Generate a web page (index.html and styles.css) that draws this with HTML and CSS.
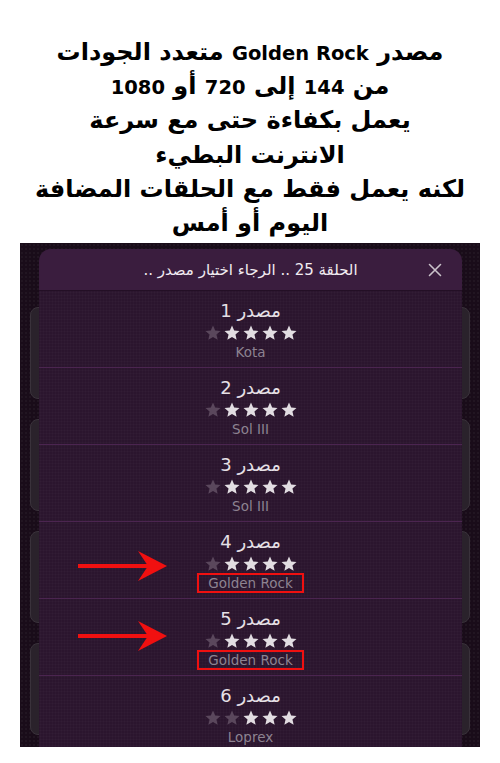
FILE: index.html
```html
<!DOCTYPE html>
<html lang="ar">
<head>
<meta charset="utf-8">
<title>Golden Rock</title>
<link rel="stylesheet" href="styles.css">
</head>
<body>
<div class="caption" dir="rtl">
  <p>مصدر <span class="latin">Golden Rock</span> متعدد الجودات</p>
  <p>من <span class="latin">144</span> إلى <span class="latin">720</span> أو <span class="latin">1080</span></p>
  <p>يعمل بكفاءة حتى مع سرعة</p>
  <p>الانترنت البطيء</p>
  <p>لكنه يعمل فقط مع الحلقات المضافة</p>
  <p>اليوم أو أمس</p>
</div>

<div class="screen">
  <div class="backdrop">
    <div class="bg-card"></div>
    <div class="bg-card"></div>
    <div class="bg-card"></div>
    <div class="bg-card"></div>
  </div>

  <div class="modal" dir="rtl">
    <div class="modal-head">
      <span class="close">
        <svg width="14" height="14" viewBox="0 0 14 14"><path d="M1.5 1.5 L12.5 12.5 M12.5 1.5 L1.5 12.5" stroke="#c9c2ca" stroke-width="1.6" stroke-linecap="round" fill="none"/></svg>
      </span>
      <span class="modal-title">الحلقة 25 .. الرجاء اختيار مصدر ..</span>
      <span class="spacer"></span>
    </div>

    <div class="source">
      <div class="src-title">مصدر 1</div>
      <div class="stars">
        <svg class="star on" viewBox="0 0 24 24"><polygon points="12,2 14.9,8.6 22,9.3 16.6,14 18.2,21 12,17.3 5.8,21 7.4,14 2,9.3 9.1,8.6"/></svg>
        <svg class="star on" viewBox="0 0 24 24"><polygon points="12,2 14.9,8.6 22,9.3 16.6,14 18.2,21 12,17.3 5.8,21 7.4,14 2,9.3 9.1,8.6"/></svg>
        <svg class="star on" viewBox="0 0 24 24"><polygon points="12,2 14.9,8.6 22,9.3 16.6,14 18.2,21 12,17.3 5.8,21 7.4,14 2,9.3 9.1,8.6"/></svg>
        <svg class="star on" viewBox="0 0 24 24"><polygon points="12,2 14.9,8.6 22,9.3 16.6,14 18.2,21 12,17.3 5.8,21 7.4,14 2,9.3 9.1,8.6"/></svg>
        <svg class="star off" viewBox="0 0 24 24"><polygon points="12,2 14.9,8.6 22,9.3 16.6,14 18.2,21 12,17.3 5.8,21 7.4,14 2,9.3 9.1,8.6"/></svg>
      </div>
      <div class="src-name"><span>Kota</span></div>
    </div>

    <div class="source">
      <div class="src-title">مصدر 2</div>
      <div class="stars">
        <svg class="star on" viewBox="0 0 24 24"><polygon points="12,2 14.9,8.6 22,9.3 16.6,14 18.2,21 12,17.3 5.8,21 7.4,14 2,9.3 9.1,8.6"/></svg>
        <svg class="star on" viewBox="0 0 24 24"><polygon points="12,2 14.9,8.6 22,9.3 16.6,14 18.2,21 12,17.3 5.8,21 7.4,14 2,9.3 9.1,8.6"/></svg>
        <svg class="star on" viewBox="0 0 24 24"><polygon points="12,2 14.9,8.6 22,9.3 16.6,14 18.2,21 12,17.3 5.8,21 7.4,14 2,9.3 9.1,8.6"/></svg>
        <svg class="star on" viewBox="0 0 24 24"><polygon points="12,2 14.9,8.6 22,9.3 16.6,14 18.2,21 12,17.3 5.8,21 7.4,14 2,9.3 9.1,8.6"/></svg>
        <svg class="star off" viewBox="0 0 24 24"><polygon points="12,2 14.9,8.6 22,9.3 16.6,14 18.2,21 12,17.3 5.8,21 7.4,14 2,9.3 9.1,8.6"/></svg>
      </div>
      <div class="src-name"><span>Sol III</span></div>
    </div>

    <div class="source">
      <div class="src-title">مصدر 3</div>
      <div class="stars">
        <svg class="star on" viewBox="0 0 24 24"><polygon points="12,2 14.9,8.6 22,9.3 16.6,14 18.2,21 12,17.3 5.8,21 7.4,14 2,9.3 9.1,8.6"/></svg>
        <svg class="star on" viewBox="0 0 24 24"><polygon points="12,2 14.9,8.6 22,9.3 16.6,14 18.2,21 12,17.3 5.8,21 7.4,14 2,9.3 9.1,8.6"/></svg>
        <svg class="star on" viewBox="0 0 24 24"><polygon points="12,2 14.9,8.6 22,9.3 16.6,14 18.2,21 12,17.3 5.8,21 7.4,14 2,9.3 9.1,8.6"/></svg>
        <svg class="star on" viewBox="0 0 24 24"><polygon points="12,2 14.9,8.6 22,9.3 16.6,14 18.2,21 12,17.3 5.8,21 7.4,14 2,9.3 9.1,8.6"/></svg>
        <svg class="star off" viewBox="0 0 24 24"><polygon points="12,2 14.9,8.6 22,9.3 16.6,14 18.2,21 12,17.3 5.8,21 7.4,14 2,9.3 9.1,8.6"/></svg>
      </div>
      <div class="src-name"><span>Sol III</span></div>
    </div>

    <div class="source">
      <svg class="arrow arrow-a" width="90" height="32" viewBox="0 0 90 32"><rect x="0" y="14" width="70" height="4" fill="#f01010"/><polygon points="60,1 89,16 60,31 70,16" fill="#f01010"/></svg>
      <div class="src-title">مصدر 4</div>
      <div class="stars">
        <svg class="star on" viewBox="0 0 24 24"><polygon points="12,2 14.9,8.6 22,9.3 16.6,14 18.2,21 12,17.3 5.8,21 7.4,14 2,9.3 9.1,8.6"/></svg>
        <svg class="star on" viewBox="0 0 24 24"><polygon points="12,2 14.9,8.6 22,9.3 16.6,14 18.2,21 12,17.3 5.8,21 7.4,14 2,9.3 9.1,8.6"/></svg>
        <svg class="star on" viewBox="0 0 24 24"><polygon points="12,2 14.9,8.6 22,9.3 16.6,14 18.2,21 12,17.3 5.8,21 7.4,14 2,9.3 9.1,8.6"/></svg>
        <svg class="star on" viewBox="0 0 24 24"><polygon points="12,2 14.9,8.6 22,9.3 16.6,14 18.2,21 12,17.3 5.8,21 7.4,14 2,9.3 9.1,8.6"/></svg>
        <svg class="star off" viewBox="0 0 24 24"><polygon points="12,2 14.9,8.6 22,9.3 16.6,14 18.2,21 12,17.3 5.8,21 7.4,14 2,9.3 9.1,8.6"/></svg>
      </div>
      <div class="src-name"><span class="marked">Golden Rock</span></div>
    </div>

    <div class="source">
      <svg class="arrow arrow-b" width="90" height="32" viewBox="0 0 90 32"><rect x="0" y="14" width="70" height="4" fill="#f01010"/><polygon points="60,1 89,16 60,31 70,16" fill="#f01010"/></svg>
      <div class="src-title">مصدر 5</div>
      <div class="stars">
        <svg class="star on" viewBox="0 0 24 24"><polygon points="12,2 14.9,8.6 22,9.3 16.6,14 18.2,21 12,17.3 5.8,21 7.4,14 2,9.3 9.1,8.6"/></svg>
        <svg class="star on" viewBox="0 0 24 24"><polygon points="12,2 14.9,8.6 22,9.3 16.6,14 18.2,21 12,17.3 5.8,21 7.4,14 2,9.3 9.1,8.6"/></svg>
        <svg class="star on" viewBox="0 0 24 24"><polygon points="12,2 14.9,8.6 22,9.3 16.6,14 18.2,21 12,17.3 5.8,21 7.4,14 2,9.3 9.1,8.6"/></svg>
        <svg class="star on" viewBox="0 0 24 24"><polygon points="12,2 14.9,8.6 22,9.3 16.6,14 18.2,21 12,17.3 5.8,21 7.4,14 2,9.3 9.1,8.6"/></svg>
        <svg class="star off" viewBox="0 0 24 24"><polygon points="12,2 14.9,8.6 22,9.3 16.6,14 18.2,21 12,17.3 5.8,21 7.4,14 2,9.3 9.1,8.6"/></svg>
      </div>
      <div class="src-name"><span class="marked">Golden Rock</span></div>
    </div>

    <div class="source">
      <div class="src-title">مصدر 6</div>
      <div class="stars">
        <svg class="star on" viewBox="0 0 24 24"><polygon points="12,2 14.9,8.6 22,9.3 16.6,14 18.2,21 12,17.3 5.8,21 7.4,14 2,9.3 9.1,8.6"/></svg>
        <svg class="star on" viewBox="0 0 24 24"><polygon points="12,2 14.9,8.6 22,9.3 16.6,14 18.2,21 12,17.3 5.8,21 7.4,14 2,9.3 9.1,8.6"/></svg>
        <svg class="star on" viewBox="0 0 24 24"><polygon points="12,2 14.9,8.6 22,9.3 16.6,14 18.2,21 12,17.3 5.8,21 7.4,14 2,9.3 9.1,8.6"/></svg>
        <svg class="star off" viewBox="0 0 24 24"><polygon points="12,2 14.9,8.6 22,9.3 16.6,14 18.2,21 12,17.3 5.8,21 7.4,14 2,9.3 9.1,8.6"/></svg>
        <svg class="star off" viewBox="0 0 24 24"><polygon points="12,2 14.9,8.6 22,9.3 16.6,14 18.2,21 12,17.3 5.8,21 7.4,14 2,9.3 9.1,8.6"/></svg>
      </div>
      <div class="src-name"><span>Loprex</span></div>
    </div>
  </div>
</div>
</body>
</html>
```

FILE: styles.css
```css
* { box-sizing: border-box; }

html, body {
  margin: 0;
  padding: 0;
  background: #ffffff;
}

body {
  width: 500px;
  height: 763px;
  overflow: hidden;
  font-family: "DejaVu Sans", "Noto Sans", sans-serif;
}

.caption {
  padding-top: 35px;
  text-align: center;
  color: #000;
  font-size: 24px;
  font-weight: bold;
  line-height: 34.2px;
}

.caption p {
  margin: 0;
  height: 34.2px;
  white-space: nowrap;
}

.caption .latin {
  font-size: 19.5px;
  line-height: 1;
}

.screen {
  position: relative;
  margin: 3px 20px 0;
  height: 504px;
  overflow: hidden;
  background-color: #190c19;
  background-image: radial-gradient(rgba(255,255,255,0.035) 0.8px, transparent 1.2px);
  background-size: 4px 4px;
}

.backdrop {
  display: flex;
  flex-direction: column;
  gap: 20px;
  padding: 64px 10px 0;
}

.bg-card {
  height: 92px;
  border-radius: 8px;
  background: #2a222b;
  border: 1px solid #3a323b;
}

.modal {
  position: absolute;
  top: 6px;
  left: 19px;
  width: 423px;
  border-radius: 12px 12px 0 0;
  background-color: #2b152e;
  background-image: radial-gradient(rgba(255,255,255,0.03) 0.8px, transparent 1.2px);
  background-size: 3px 3px;
  overflow: hidden;
}

.modal-head {
  display: grid;
  grid-template-columns: 1fr auto 1fr;
  align-items: center;
  height: 42px;
  padding: 0 20px;
  background-color: #3a1d3e;
  border-bottom: 1px solid #230f25;
}

.close {
  justify-self: start;
  display: flex;
  align-items: center;
}

.close svg {
  display: block;
}

.modal-title {
  color: #f1ebf1;
  font-size: 15px;
  line-height: 20px;
  white-space: nowrap;
}

.source {
  position: relative;
  height: 77px;
  padding-top: 8px;
  border-bottom: 1px solid #4b2550;
  text-align: center;
}

.src-title {
  color: #e6e0e6;
  font-size: 18px;
  line-height: 24px;
}

.stars {
  display: flex;
  justify-content: center;
  gap: 1px;
  height: 18px;
  margin-top: 1px;
}

.star {
  width: 18px;
  height: 18px;
  display: block;
}

.star.on { fill: #e2dde2; }
.star.off { fill: #5a475c; }

.src-name {
  color: #8d8391;
  font-size: 13.5px;
  line-height: 20px;
  height: 20px;
}

.src-name .marked {
  display: inline-block;
  border: 2px solid #f01010;
  padding: 0 9px;
  line-height: 16px;
  vertical-align: top;
}

.arrow {
  position: absolute;
  left: 39px;
}

.arrow-a { top: 28px; }
.arrow-b { top: 21px; }
```
